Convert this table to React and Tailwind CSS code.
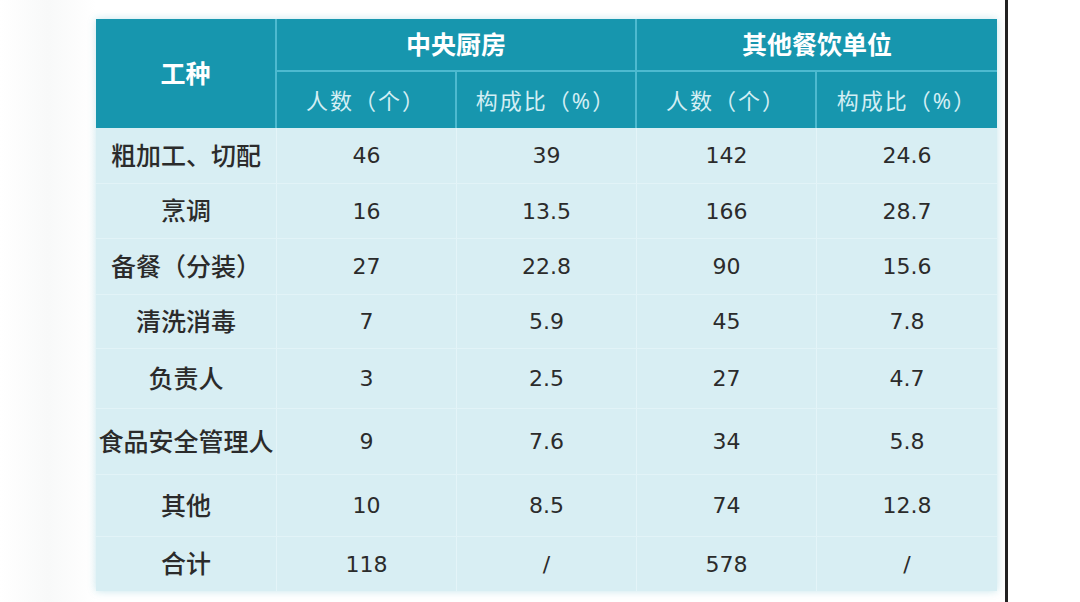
const rows = [
  { name: "粗加工、切配", a: "46", b: "39", c: "142", d: "24.6", h: "h-[56px]" },
  { name: "烹调", a: "16", b: "13.5", c: "166", d: "28.7", h: "h-[55px]" },
  { name: "备餐（分装）", a: "27", b: "22.8", c: "90", d: "15.6", h: "h-[56px]" },
  { name: "清洗消毒", a: "7", b: "5.9", c: "45", d: "7.8", h: "h-[54px]" },
  { name: "负责人", a: "3", b: "2.5", c: "27", d: "4.7", h: "h-[60px]" },
  { name: "食品安全管理人", a: "9", b: "7.6", c: "34", d: "5.8", h: "h-[66px]" },
  { name: "其他", a: "10", b: "8.5", c: "74", d: "12.8", h: "h-[62px]" },
  { name: "合计", a: "118", b: "/", c: "578", d: "/", h: "h-[54px]" },
];

const cjk = "font-['Noto_Sans','Noto_Sans_CJK_SC',sans-serif]";
const num = "font-['DejaVu_Sans','Noto_Sans_CJK_SC',sans-serif]";

function Cell({ children, className = "" }) {
  return (
    <div className={`flex items-center justify-center ${className}`}>
      {children}
    </div>
  );
}

export default function App() {
  return (
    <div className="flex h-[602px] w-[1080px] bg-white">
      <div className="w-[96px] shrink-0 bg-gradient-to-r from-white via-[#f8f9f9] to-white" />

      {/* table */}
      <div className="mt-[19px] h-[572px] w-[901px] shrink-0 shadow-[0_0_8px_rgba(23,150,174,0.25)]">
        {/* header */}
        <div className={`grid grid-cols-[181px_180px_180px_180px_180px] grid-rows-[53px_56px] bg-[#1796ae] text-white ${cjk}`}>
          <Cell className="row-span-2 border-r-2 border-[#4dbad0] text-[25px] font-bold">
            工种
          </Cell>
          <Cell className="col-span-2 border-b-2 border-r-2 border-[#4dbad0] text-[25px] font-bold">
            中央厨房
          </Cell>
          <Cell className="col-span-2 border-b-2 border-[#4dbad0] text-[25px] font-bold">
            其他餐饮单位
          </Cell>
          <Cell className="border-r-2 border-[#4dbad0] text-[22px] tracking-[2px] text-[#d3eef4]">
            人数（个）
          </Cell>
          <Cell className="border-r-2 border-[#4dbad0] text-[22px] tracking-[2px] text-[#d3eef4]">
            构成比（%）
          </Cell>
          <Cell className="border-r-2 border-[#4dbad0] text-[22px] tracking-[2px] text-[#d3eef4]">
            人数（个）
          </Cell>
          <Cell className="text-[22px] tracking-[2px] text-[#d3eef4]">构成比（%）</Cell>
        </div>

        {/* body */}
        <div className="bg-[#d8eef3] text-[#2b2b2b]">
          {rows.map((r, i) => (
            <div
              key={r.name}
              className={`grid grid-cols-[181px_180px_180px_180px_180px] ${r.h} ${
                i < rows.length - 1 ? "border-b border-[#e2f3f7]" : ""
              }`}
            >
              <Cell className={`border-r border-[#e4f4f8] text-[25px] font-medium ${cjk}`}>
                {r.name}
              </Cell>
              <Cell className={`border-r border-[#e4f4f8] text-[22px] ${num}`}>{r.a}</Cell>
              <Cell className={`border-r border-[#e4f4f8] text-[22px] ${num}`}>{r.b}</Cell>
              <Cell className={`border-r border-[#e4f4f8] text-[22px] ${num}`}>{r.c}</Cell>
              <Cell className={`text-[22px] ${num}`}>{r.d}</Cell>
            </div>
          ))}
        </div>
      </div>

      <div className="ml-[8px] h-full w-[3px] shrink-0 bg-[#222]" />
      <div className="flex-1 bg-white" />
    </div>
  );
}
